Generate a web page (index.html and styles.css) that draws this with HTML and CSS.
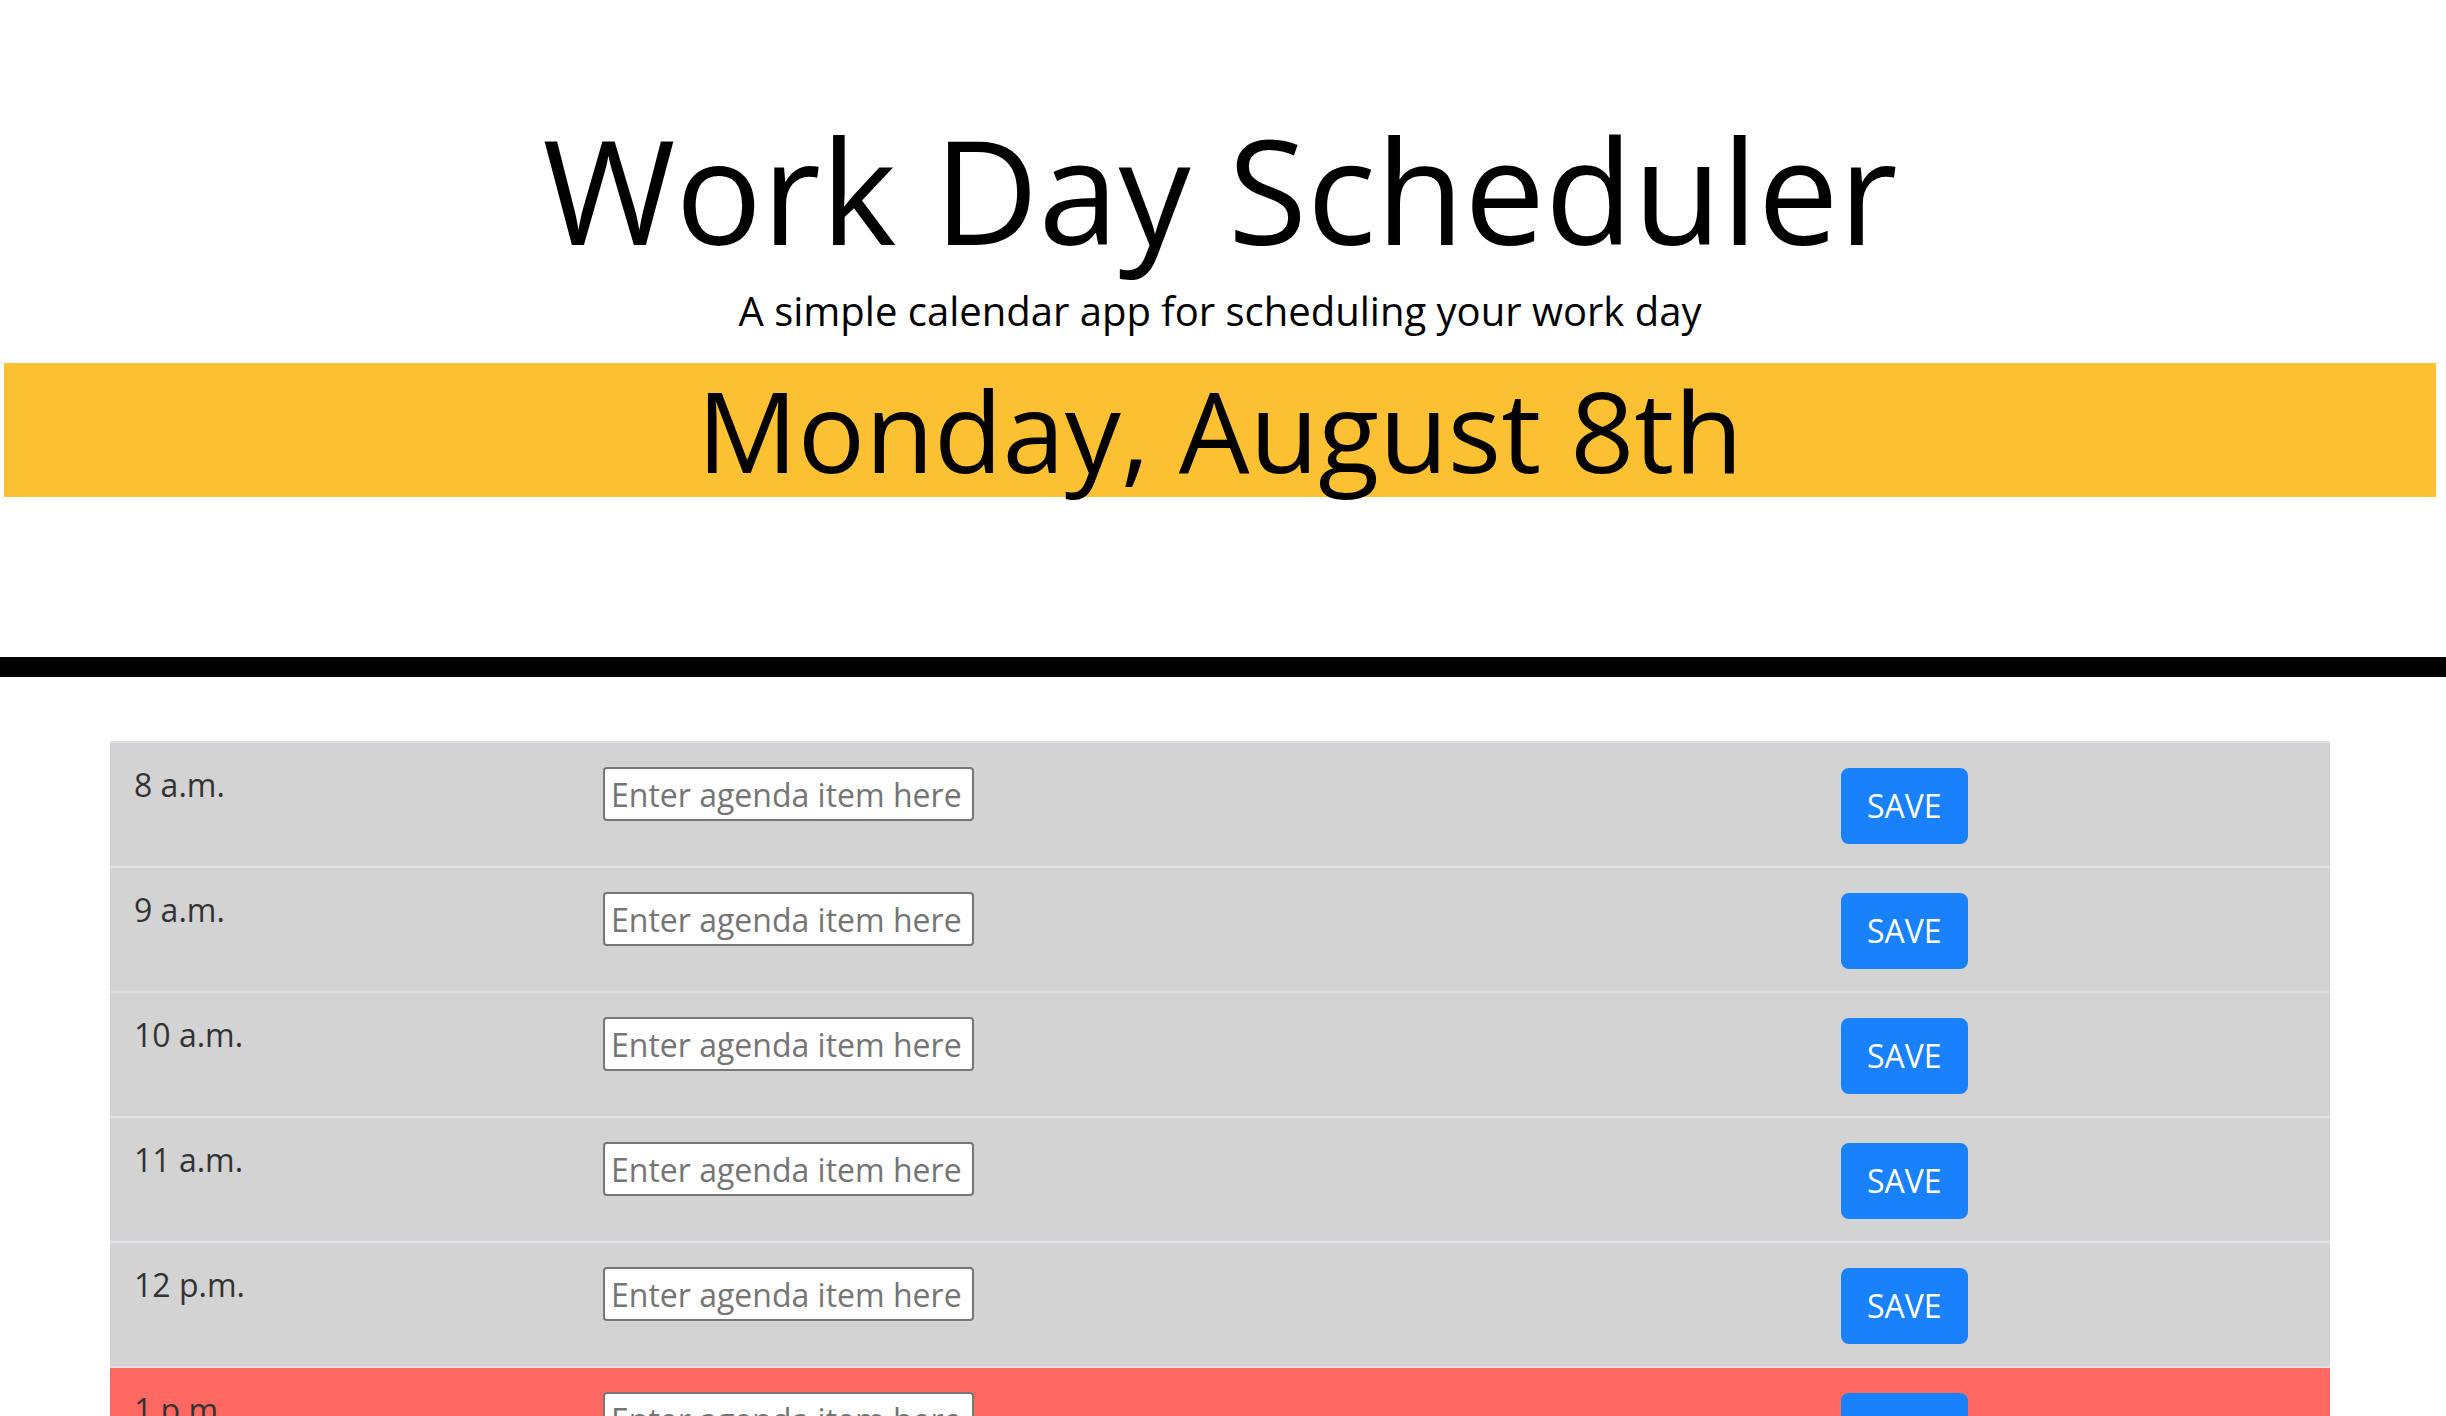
FILE: index.html
```html
<!DOCTYPE html>
<html lang="en">
<head>
<meta charset="utf-8">
<title>Work Day Scheduler</title>
<link rel="stylesheet" href="styles.css">
</head>
<body>
<header class="jumbotron">
  <div class="jumbo-inner">
    <h1 class="title">Work Day Scheduler</h1>
    <p class="lead">A simple calendar app for scheduling your work day</p>
    <p class="current-day">Monday, August 8th</p>
  </div>
</header>
<main class="container">
  <div class="time-block past">
    <div class="hour">8 a.m.</div>
    <div class="desc-cell"><input class="description" type="text" placeholder="Enter agenda item here"></div>
    <div class="btn-cell"><button class="saveBtn">SAVE</button></div>
  </div>
  <div class="time-block past">
    <div class="hour">9 a.m.</div>
    <div class="desc-cell"><input class="description" type="text" placeholder="Enter agenda item here"></div>
    <div class="btn-cell"><button class="saveBtn">SAVE</button></div>
  </div>
  <div class="time-block past">
    <div class="hour">10 a.m.</div>
    <div class="desc-cell"><input class="description" type="text" placeholder="Enter agenda item here"></div>
    <div class="btn-cell"><button class="saveBtn">SAVE</button></div>
  </div>
  <div class="time-block past">
    <div class="hour">11 a.m.</div>
    <div class="desc-cell"><input class="description" type="text" placeholder="Enter agenda item here"></div>
    <div class="btn-cell"><button class="saveBtn">SAVE</button></div>
  </div>
  <div class="time-block past">
    <div class="hour">12 p.m.</div>
    <div class="desc-cell"><input class="description" type="text" placeholder="Enter agenda item here"></div>
    <div class="btn-cell"><button class="saveBtn">SAVE</button></div>
  </div>
  <div class="time-block present">
    <div class="hour">1 p.m.</div>
    <div class="desc-cell"><input class="description" type="text" placeholder="Enter agenda item here"></div>
    <div class="btn-cell"><button class="saveBtn">SAVE</button></div>
  </div>
  <div class="time-block future">
    <div class="hour">2 p.m.</div>
    <div class="desc-cell"><input class="description" type="text" placeholder="Enter agenda item here"></div>
    <div class="btn-cell"><button class="saveBtn">SAVE</button></div>
  </div>
  <div class="time-block future">
    <div class="hour">3 p.m.</div>
    <div class="desc-cell"><input class="description" type="text" placeholder="Enter agenda item here"></div>
    <div class="btn-cell"><button class="saveBtn">SAVE</button></div>
  </div>
  <div class="time-block future">
    <div class="hour">4 p.m.</div>
    <div class="desc-cell"><input class="description" type="text" placeholder="Enter agenda item here"></div>
    <div class="btn-cell"><button class="saveBtn">SAVE</button></div>
  </div>
  <div class="time-block future">
    <div class="hour">5 p.m.</div>
    <div class="desc-cell"><input class="description" type="text" placeholder="Enter agenda item here"></div>
    <div class="btn-cell"><button class="saveBtn">SAVE</button></div>
  </div>
</main>
</body>
</html>
```
FILE: styles.css
```css
* {
  box-sizing: border-box;
}

html, body {
  margin: 0;
  padding: 0;
  background: #ffffff;
}

body {
  font-family: "Open Sans", "Noto Sans", "Liberation Sans", sans-serif;
  font-size: 32px;
  line-height: 1;
  color: #212529;
}

.jumbotron {
  border-bottom: 20px solid #000000;
  padding: 117px 0 160px 0;
}

.jumbo-inner {
  margin: 0 10px 0 4px;
  text-align: center;
  color: #000000;
}

.title {
  margin: 0;
  font-size: 144px;
  font-weight: 400;
  line-height: 1;
}

.lead {
  margin: 30px 0 32px 0;
  font-size: 40px;
  line-height: 1;
}

.current-day {
  margin: 0;
  font-size: 112px;
  line-height: 1.2;
  background: #fcc133;
}

.container {
  width: 2220px;
  margin: 64px 0 0 110px;
}

.time-block {
  display: grid;
  grid-template-columns: 493px 1238px 1fr;
  align-items: start;
  height: 125px;
  border-top: 2px solid #dee2e6;
  padding-top: 24px;
}

.past {
  background-color: #d3d3d3;
}

.present {
  background-color: #ff6961;
}

.future {
  background-color: #77dd77;
}

.hour {
  padding: 2px 0 0 24px;
  color: #333333;
}

.description {
  display: block;
  width: 371px;
  height: 54px;
  margin: 0;
  padding: 2px 6px;
  border: 2px solid #767676;
  border-radius: 4px;
  background: #ffffff;
  font-family: inherit;
  font-size: 32px;
  color: #000000;
}

.description::placeholder {
  color: #757575;
}

.saveBtn {
  display: block;
  margin-top: 1px;
  padding: 12px 24px;
  border: 2px solid #1881fb;
  border-radius: 8px;
  background: #1881fb;
  color: #ffffff;
  font-family: inherit;
  font-size: 32px;
  line-height: 1.5;
}
```
